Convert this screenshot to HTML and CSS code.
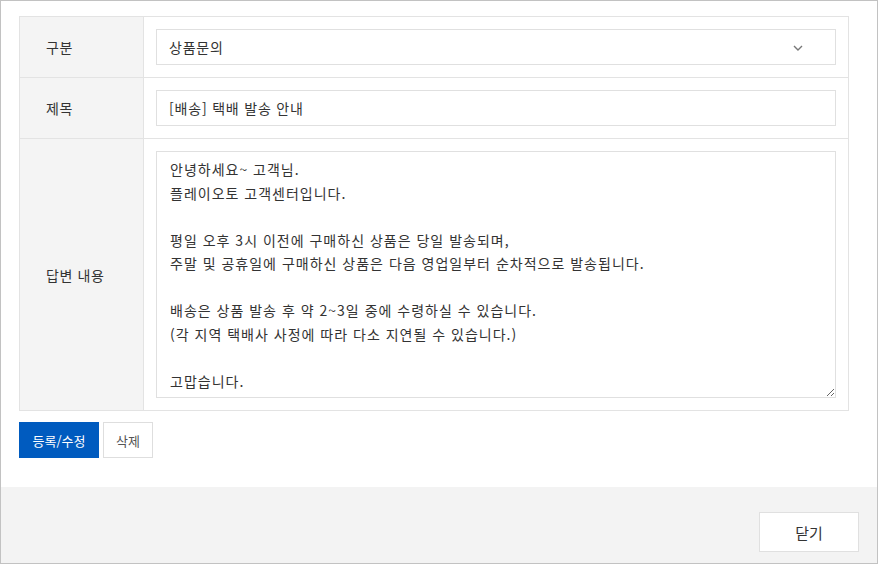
FILE: index.html
```html
<!DOCTYPE html>
<html lang="ko">
<head>
  <meta charset="UTF-8" />
  <title>문의 답변</title>
  <link rel="stylesheet" href="styles.css">
</head>
<body>
  <div class="frame">
    <div class="content">
      <table class="form">
        <tr class="row">
          <th>구분</th>
          <td>
            <div class="select">
              <span>상품문의</span>
              <svg width="10" height="6" viewBox="0 0 10 6"><path d="M1 1l4 4 4-4" fill="none" stroke="#777" stroke-width="1.4"/></svg>
            </div>
          </td>
        </tr>
        <tr class="row">
          <th>제목</th>
          <td><input class="field" type="text" value="[배송] 택배 발송 안내"></td>
        </tr>
        <tr class="row-tall">
          <th>답변 내용</th>
          <td><textarea class="field area">안녕하세요~ 고객님.
플레이오토 고객센터입니다.

평일 오후 3시 이전에 구매하신 상품은 당일 발송되며,
주말 및 공휴일에 구매하신 상품은 다음 영업일부터 순차적으로 발송됩니다.

배송은 상품 발송 후 약 2~3일 중에 수령하실 수 있습니다.
(각 지역 택배사 사정에 따라 다소 지연될 수 있습니다.)

고맙습니다.</textarea></td>
        </tr>
      </table>
      <div class="actions">
        <button class="btn primary">등록/수정</button>
        <button class="btn del">삭제</button>
      </div>
    </div>
    <div class="footer">
      <button class="btn close">닫기</button>
    </div>
  </div>
</body>
</html>
```

FILE: styles.css
```css
body { margin:0; font-family:"Noto Sans CJK KR", "Noto Sans", sans-serif; color:#333; background:#fff; }
.frame { width:878px; height:564px; box-sizing:border-box; border:1px solid #c2c2c2; display:flex; flex-direction:column; }
.content { flex:1; padding:15px 0 0 18px; }
.form { width:830px; border-collapse:collapse; border:1px solid #e3e3e3; }
.form th { width:124px; background:#f4f4f4; border:1px solid #e3e3e3; text-align:left; padding:0 0 0 26px; box-sizing:border-box; font-weight:normal; font-size:14px; letter-spacing:0.6px; }
.form td { border:1px solid #e3e3e3; padding:12px; }
.row { height:61px; }
.row-tall { height:272px; }
.select, .field { box-sizing:border-box; width:680px; height:36px; border:1px solid #e0e0e0; background:#fff; font-family:inherit; font-size:14px; color:#333; letter-spacing:0.8px; }
.select { display:flex; justify-content:space-between; align-items:center; padding:0 32px 0 12px; }
.select svg { margin-top:1px; }
.field { padding:0 12px; outline:none; display:block; }
.area { height:247px; padding:6px 13px 4px; line-height:23.5px; letter-spacing:1px; resize:vertical; }
.actions { display:flex; gap:4px; margin-top:11px; align-items:flex-start; }
.btn { font-family:inherit; font-size:13px; background:#fff; color:#555; border:1px solid #dedede; height:36px; padding:0 14px; cursor:pointer; }
.primary { background:#005bbf; border-color:#005bbf; color:#fff; width:80px; padding:0; }
.del { width:50px; padding:0; }
.footer { height:76px; background:#f3f3f3; display:flex; justify-content:flex-end; padding:25px 18px 0 0; box-sizing:border-box; }
.close { width:100px; height:40px; font-size:15px; color:#333; border-color:#e0e0e0; }
```
